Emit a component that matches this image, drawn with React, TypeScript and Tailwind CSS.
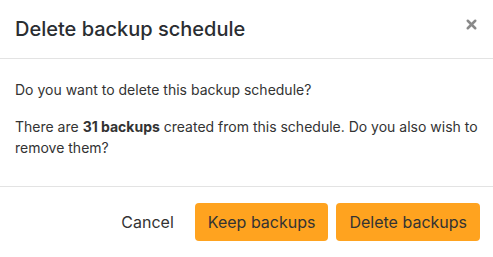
import { X } from 'lucide-react';

export default function App() {
  return (
    <div className="h-[257px] w-[493px] bg-white text-[#2b2b2b] font-['Inter',sans-serif]">
      <div className="flex h-[59px] items-center justify-between border-b border-[#e3e3e3] pl-[15px] pr-[14px]">
        <h2 className="text-[20px] font-medium text-[#2a2d31]">Delete backup schedule</h2>
        <button className="mb-[10px] text-[#8a8a8a]">
          <X size={15} strokeWidth={4} />
        </button>
      </div>
      <div className="h-[128px] border-b border-[#e3e3e3] px-[15px] pt-[20px] text-[14px] leading-[21px] text-[#333]">
        <p>Do you want to delete this backup schedule?</p>
        <p className="mt-[16px]">
          There are <span className="font-bold">31 backups</span> created from this schedule. Do you also wish to
          remove them?
        </p>
      </div>
      <div className="flex items-center justify-end gap-2 pr-[13px] pt-[16px]">
        <button className="h-[38px] px-[13px] text-[16px] text-[#333]">Cancel</button>
        <button className="h-[38px] rounded-[4px] bg-[#ffa31f] px-[13px] text-[16px] text-[#333]">Keep backups</button>
        <button className="h-[38px] rounded-[4px] bg-[#ffa31f] px-[13px] text-[16px] text-[#333]">Delete backups</button>
      </div>
    </div>
  );
}
